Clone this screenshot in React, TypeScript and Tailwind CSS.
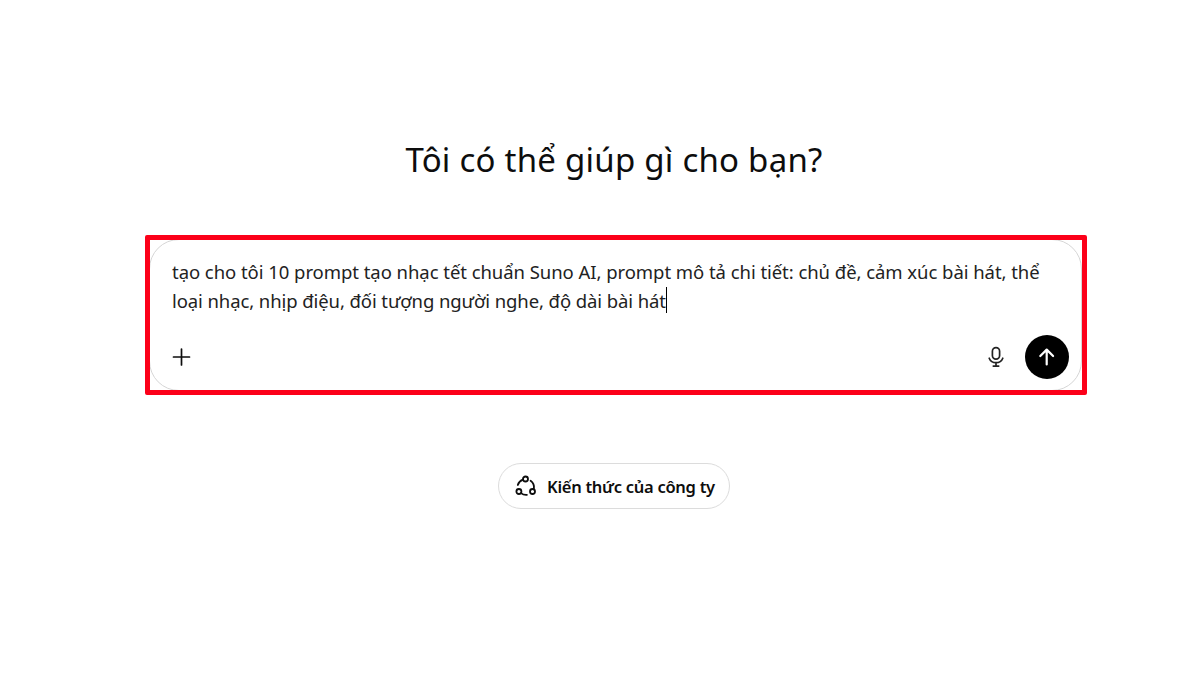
const PROMPT_LINES = [
  { text: "tạo cho tôi 10 prompt tạo nhạc tết chuẩn Suno AI, prompt mô tả chi tiết: chủ đề, cảm xúc bài hát, thể", tracking: "tracking-[-0.05px]" },
  { text: "loại nhạc, nhịp điệu, đối tượng người nghe, độ dài bài hát", tracking: "tracking-[-0.09px]" },
];

function PlusIcon() {
  return (
    <svg className="h-5 w-5" viewBox="0 0 20 20" fill="none" stroke="#0d0d0d" strokeWidth="1.7" strokeLinecap="round">
      <path d="M9.5 2v16M1.5 10h16" />
    </svg>
  );
}

function MicIcon() {
  return (
    <svg className="h-[22px] w-[18px]" viewBox="0 0 18 22" fill="none" stroke="#222" strokeWidth="1.7" strokeLinecap="round">
      <rect x="5.4" y="1.6" width="7.2" height="11.6" rx="3.6" />
      <path d="M2.2 12.2C3.3 15 5.8 16.7 9 16.7s5.7-1.7 6.8-4.5M9 16.7v3.2M6.3 20.1h5.4" />
    </svg>
  );
}

function ArrowUpIcon() {
  return (
    <svg className="h-5 w-5" viewBox="0 0 20 20" fill="none" stroke="#fff" strokeWidth="2.2" strokeLinecap="round" strokeLinejoin="round">
      <path d="M9.7 17.4V2.8M3.3 9L9.7 2.6 16.1 9" />
    </svg>
  );
}

function KnowledgeIcon() {
  return (
    <svg className="h-[22px] w-[22px]" viewBox="0 0 22 22" fill="none" stroke="#0d0d0d" strokeWidth="1.8" strokeLinecap="round">
      <circle cx="10.5" cy="4" r="2.5" />
      <circle cx="3.9" cy="16.5" r="2.5" />
      <circle cx="17.5" cy="16.5" r="2.5" />
      <path d="M7.8 4.6C5.4 5.6 3.5 7.5 2.8 10" />
      <path d="M15.6 5.8c2.4 1.7 3.7 4.6 3.3 7.6" />
      <path d="M6 18.1c1.6 1.3 3.6 1.9 5.9 1.7" />
    </svg>
  );
}

export default function App() {
  return (
    <main className="flex h-[675px] w-[1200px] flex-col items-center overflow-hidden bg-white pl-7 font-['Noto_Sans','Open_Sans',sans-serif] text-[#0d0d0d]">
      <h1 className="mt-[136px] h-[48px] text-[33px] leading-[48px] whitespace-nowrap tracking-[0.24px]">
        Tôi có thể giúp gì cho bạn?
      </h1>

      {/* Highlighted composer */}
      <section className="mt-[51px] mr-[-4px] h-[160px] w-[942px] shrink-0 overflow-hidden rounded-[2px] border-5 border-[#fc0019] bg-white">
        <div className="-mt-px -ml-px flex h-[152px] w-[933px] flex-col rounded-[30px] border border-[#d6d6d6] pt-[17px] pr-[12px] pl-[22px]">
          <div className="text-[18.5px] leading-[29px] text-[#222]">
            {PROMPT_LINES.map((line, i) => (
              <p key={i} className="flex items-center whitespace-nowrap">
                <span className={line.tracking}>{line.text}</span>
                {i === PROMPT_LINES.length - 1 && <span className="mb-[2px] h-[26px] w-px bg-black" />}
              </p>
            ))}
          </div>
          <div className="mt-[20px] flex items-center">
            <button aria-label="Thêm"><PlusIcon /></button>
            <button className="ml-auto" aria-label="Micro"><MicIcon /></button>
            <button className="ml-[20px] flex h-[44px] w-[44px] items-center justify-center rounded-full bg-black" aria-label="Gửi">
              <ArrowUpIcon />
            </button>
          </div>
        </div>
      </section>

      <button className="mt-[68px] flex h-[46px] w-[232px] items-center rounded-full border border-[#dcdcdc] pl-[16px]">
        <KnowledgeIcon />
        <span className="mt-[2px] ml-[10px] text-[16.5px] font-semibold whitespace-nowrap tracking-[-0.28px]">Kiến thức của công ty</span>
      </button>
    </main>
  );
}
